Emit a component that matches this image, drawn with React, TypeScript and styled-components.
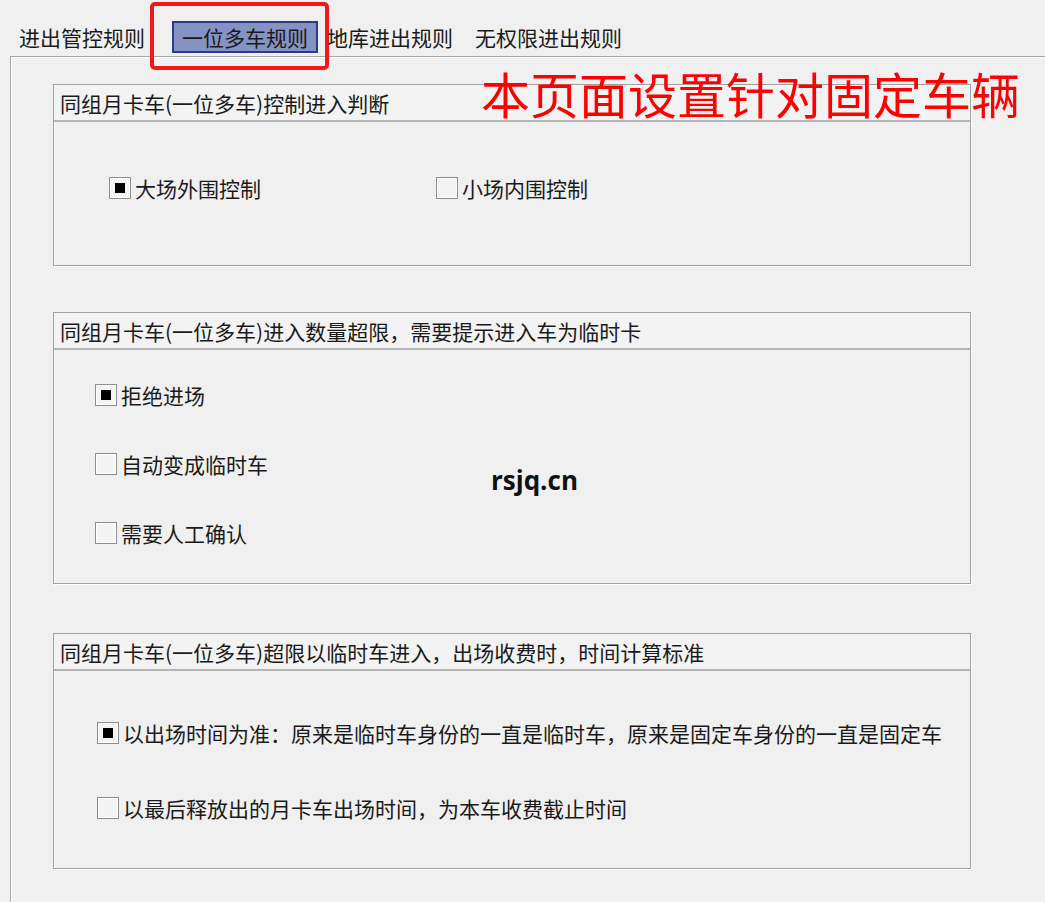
import styled, { createGlobalStyle } from "styled-components";

const GlobalStyle = createGlobalStyle`
  html, body {
    margin: 0;
    padding: 0;
    background: #f0f0f0;
    overflow: hidden;
  }
  body {
    font-family: "Noto Sans CJK SC", "Noto Sans", sans-serif;
    color: #1a1a1a;
  }
`;

const Page = styled.div`
  position: relative;
  width: 1045px;
  height: 902px;
  overflow: hidden;
`;

const TabRow = styled.div`
  display: flex;
  align-items: flex-end;
  box-sizing: border-box;
  height: 56px;
  padding: 0 0 3px 8px;
`;

const Tab = styled.div<{ $active?: boolean }>`
  position: relative;
  box-sizing: border-box;
  height: 32px;
  margin: ${({ $active }) => ($active ? "0 -2px 0 16px" : "0")};
  padding: 0 ${({ $active }) => ($active ? "8px" : "9px")};
  display: flex;
  align-items: center;
  font-size: 21px;
  line-height: 1;
  white-space: nowrap;
  background: ${({ $active }) => ($active ? "#8592c4" : "transparent")};
  border: ${({ $active }) => ($active ? "2px solid #2b3a8c" : "2px solid transparent")};
`;

const Highlight = styled.div`
  position: absolute;
  left: -24px;
  top: -21px;
  width: 179px;
  height: 68px;
  box-sizing: border-box;
  border: 4px solid #f01818;
  border-radius: 5px;
  pointer-events: none;
`;

const Panel = styled.div`
  margin-left: 10px;
  min-height: 846px;
  box-sizing: border-box;
  border-left: 1px solid #a8a8a8;
  border-top: 1px solid #a8a8a8;
  box-shadow: inset 1px 1px 0 #ffffff;
  padding: 27px 0 0 42px;
  display: flex;
  flex-direction: column;
`;

const Group = styled.section<{ $height: number; $gapAfter: number }>`
  width: 918px;
  height: ${({ $height }) => $height}px;
  margin-bottom: ${({ $gapAfter }) => $gapAfter}px;
  box-sizing: border-box;
  border: 1px solid #a0a0a0;
  box-shadow: 1px 1px 0 #ffffff, inset 1px 1px 0 #ffffff;
  display: flex;
  flex-direction: column;
`;

const GroupTitle = styled.header`
  height: 37px;
  box-sizing: border-box;
  border-bottom: 2px solid #b4b4b4;
  background: #f3f3f3;
  padding-left: 6px;
  display: flex;
  align-items: center;
  font-size: 21px;
  white-space: nowrap;
`;

const OptionGrid = styled.div<{ $top: number; $left: number; $gap: number }>`
  display: flex;
  flex-direction: column;
  gap: ${({ $gap }) => $gap}px;
  padding: ${({ $top }) => $top}px 0 0 ${({ $left }) => $left}px;
`;

const OptionLine = styled.div`
  display: grid;
  grid-template-columns: 327px auto;
`;

const Option = styled.label`
  display: flex;
  align-items: center;
  gap: 4px;
  height: 24px;
  font-size: 21px;
  white-space: nowrap;
`;

const Box = styled.span<{ $checked?: boolean }>`
  width: 22px;
  height: 22px;
  box-sizing: border-box;
  border: 1px solid #8e8e8e;
  box-shadow: inset 0 0 0 1px #ffffff;
  background: #f4f4f4;
  display: flex;
  align-items: center;
  justify-content: center;
  flex-shrink: 0;

  &::after {
    content: "";
    width: 10px;
    height: 10px;
    background: ${({ $checked }) => ($checked ? "#000" : "transparent")};
  }
`;

const Note = styled.div`
  position: absolute;
  left: 481px;
  top: 63px;
  font-size: 49px;
  line-height: 60px;
  color: #ff0000;
  white-space: nowrap;
  pointer-events: none;
`;

const Watermark = styled.div`
  position: absolute;
  left: 491px;
  top: 462px;
  font-family: "Open Sans", "DejaVu Sans", sans-serif;
  font-weight: 700;
  font-size: 26px;
  color: #111;
  pointer-events: none;
`;

const Check = ({ checked, label }: { checked?: boolean; label: string }) => (
  <Option>
    <Box $checked={checked} />
    {label}
  </Option>
);

const App = () => {
  return (
    <Page>
      <GlobalStyle />
      <TabRow>
        <Tab>进出管控规则</Tab>
        <Tab $active>
          一位多车规则
          <Highlight />
        </Tab>
        <Tab>地库进出规则</Tab>
        <Tab>无权限进出规则</Tab>
      </TabRow>
      <Panel>
        <Group $height={182} $gapAfter={46}>
          <GroupTitle>同组月卡车(一位多车)控制进入判断</GroupTitle>
          <OptionGrid $top={54} $left={55} $gap={0}>
            <OptionLine>
              <Check checked label="大场外围控制" />
              <Check label="小场内围控制" />
            </OptionLine>
          </OptionGrid>
        </Group>
        <Group $height={272} $gapAfter={49}>
          <GroupTitle>同组月卡车(一位多车)进入数量超限，需要提示进入车为临时卡</GroupTitle>
          <OptionGrid $top={33} $left={41} $gap={45}>
            <Check checked label="拒绝进场" />
            <Check label="自动变成临时车" />
            <Check label="需要人工确认" />
          </OptionGrid>
        </Group>
        <Group $height={236} $gapAfter={0}>
          <GroupTitle>同组月卡车(一位多车)超限以临时车进入，出场收费时，时间计算标准</GroupTitle>
          <OptionGrid $top={50} $left={43} $gap={51}>
            <Check checked label="以出场时间为准：原来是临时车身份的一直是临时车，原来是固定车身份的一直是固定车" />
            <Check label="以最后释放出的月卡车出场时间，为本车收费截止时间" />
          </OptionGrid>
        </Group>
      </Panel>
      <Note>本页面设置针对固定车辆</Note>
      <Watermark>rsjq.cn</Watermark>
    </Page>
  );
};

export default App;
